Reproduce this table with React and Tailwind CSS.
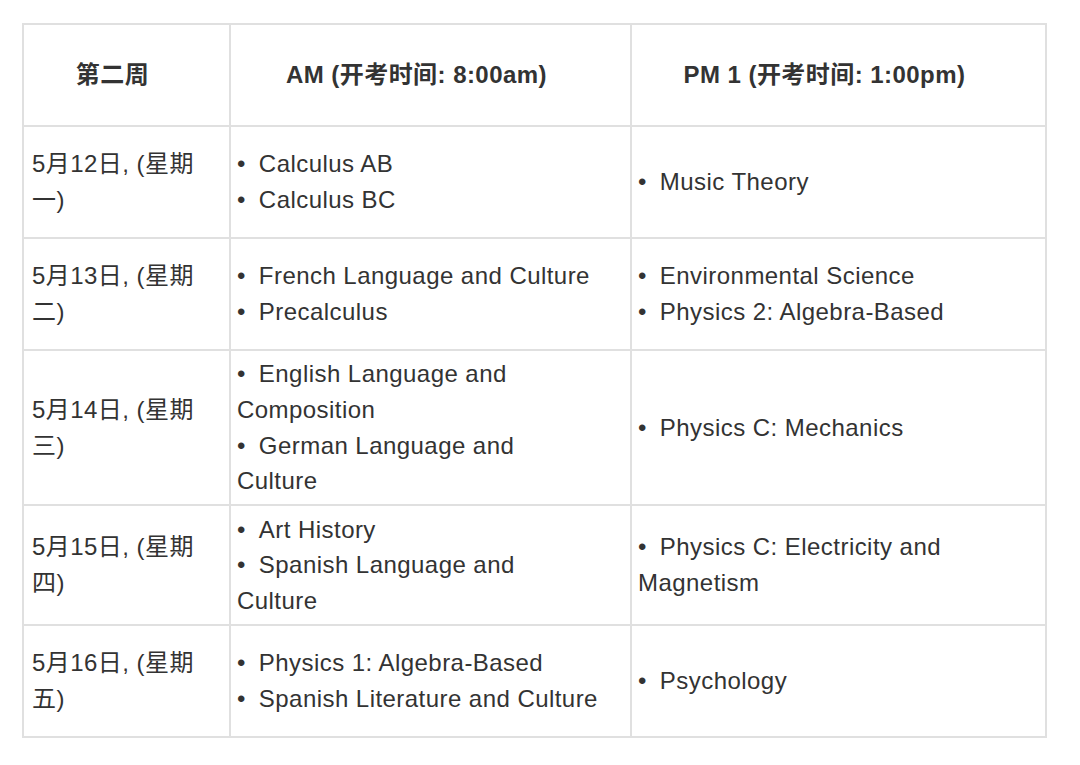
import React from "react";

const rows = [
  { day: "5月12日, (星期一)", am: ["Calculus AB", "Calculus BC"], pm: ["Music Theory"], h: "h-[112px]" },
  { day: "5月13日, (星期二)", am: ["French Language and Culture", "Precalculus"], pm: ["Environmental Science", "Physics 2: Algebra-Based"], h: "h-[112px]" },
  { day: "5月14日, (星期三)", am: ["English Language and Composition", "German Language and Culture"], pm: ["Physics C: Mechanics"], h: "h-[155px]" },
  { day: "5月15日, (星期四)", am: ["Art History", "Spanish Language and Culture"], pm: ["Physics C: Electricity and Magnetism"], h: "h-[120px]" },
  { day: "5月16日, (星期五)", am: ["Physics 1: Algebra-Based", "Spanish Literature and Culture"], pm: ["Psychology"], h: "h-[112px]" },
];

const Items = ({ list }) => (
  <div>
    {list.map((item) => (
      <div key={item}>
        <span className="mr-[13px]">•</span>
        {item}
      </div>
    ))}
  </div>
);

const App = () => {
  return (
    <div
      className="min-h-screen bg-white pt-[23px] pl-[22px] text-[24px] leading-[35.6px] tracking-[0.45px] text-[#333333]"
      style={{ fontFamily: '"Liberation Sans", "Noto Sans CJK SC", sans-serif' }}
    >
      <table className="w-[1023px] table-fixed border-collapse border-2 border-[#e0e0e0]">
        <colgroup>
          <col className="w-[207px]" />
          <col className="w-[401px]" />
          <col className="w-[415px]" />
        </colgroup>
        <thead>
          <tr className="h-[102px]">
            <th className="border-2 border-[#e0e0e0] pl-[8px] pr-[36px] text-center font-bold">第二周</th>
            <th className="border-2 border-[#e0e0e0] pl-[8px] pr-[36px] text-center font-bold">AM (开考时间: 8:00am)</th>
            <th className="border-2 border-[#e0e0e0] pl-[8px] pr-[36px] text-center font-bold">PM 1 (开考时间: 1:00pm)</th>
          </tr>
        </thead>
        <tbody>
          {rows.map((row) => (
            <tr key={row.day} className={row.h}>
              <td className="border-2 border-[#e0e0e0] pl-[8px] pr-[5px] align-middle">{row.day}</td>
              <td className="border-2 border-[#e0e0e0] pl-[6px] pr-[30px] align-middle">
                <Items list={row.am} />
              </td>
              <td className="border-2 border-[#e0e0e0] px-[6px] align-middle">
                <Items list={row.pm} />
              </td>
            </tr>
          ))}
        </tbody>
      </table>
    </div>
  );
};

export default App;
